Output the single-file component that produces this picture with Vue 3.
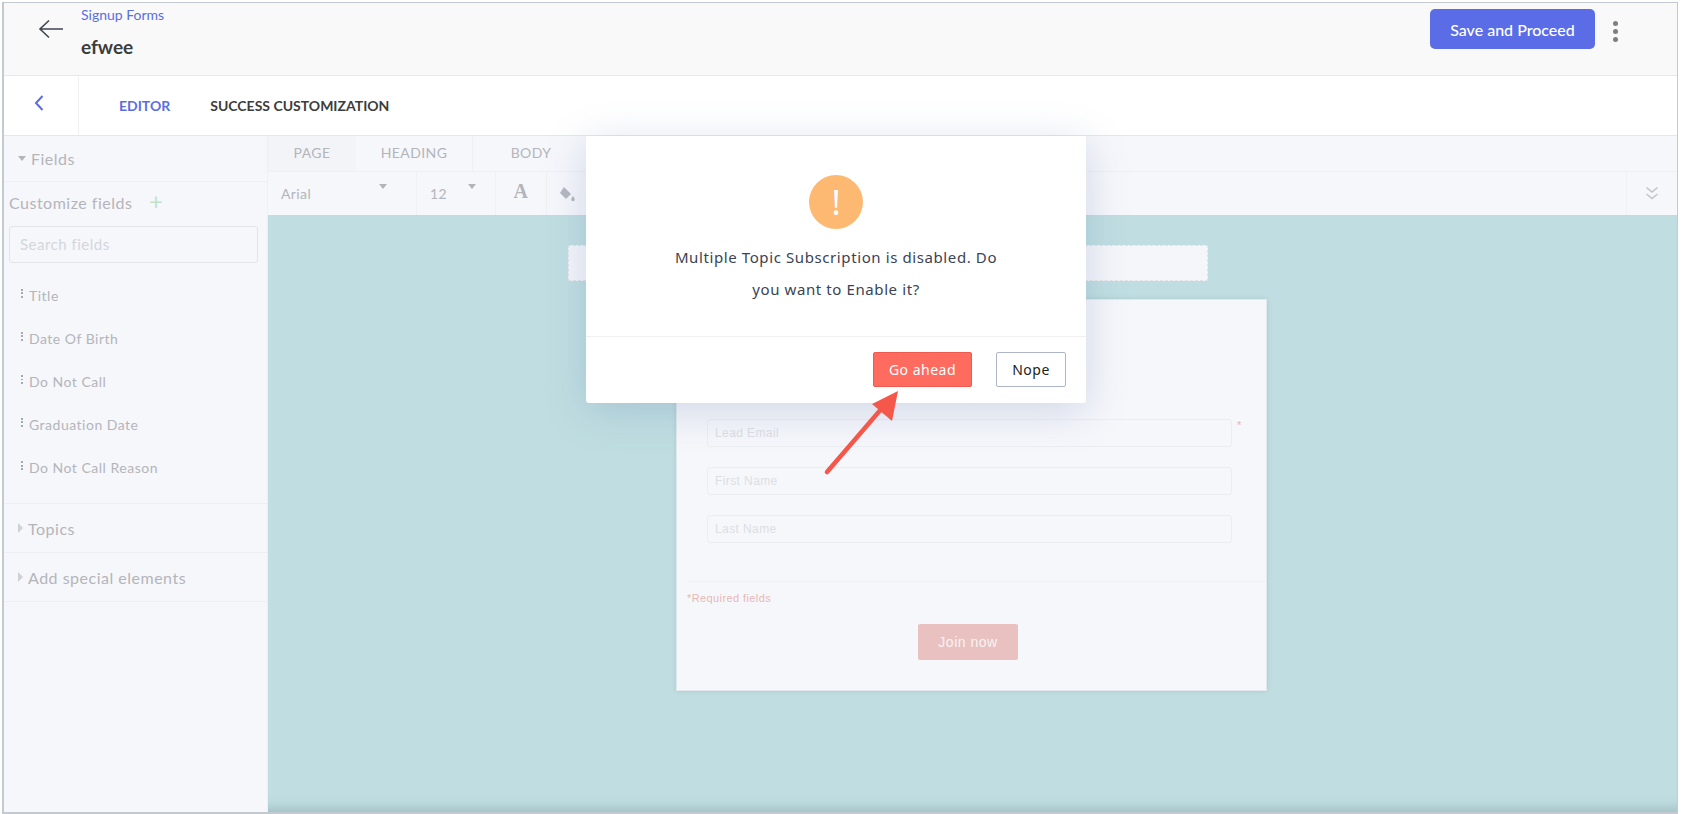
<template>
  <div class="frame">
    <header class="topbar">
      <div class="topbar-left">
        <svg class="back" width="26" height="20" viewBox="0 0 26 20">
          <path d="M25 10H2M11 1.5L2 10l9 8.5" fill="none" stroke="#3f4650" stroke-width="1.6" />
        </svg>
        <div class="crumbs">
          <a class="crumb-link">Signup Forms</a>
          <div class="crumb-title">efwee</div>
        </div>
      </div>
      <div class="topbar-right">
        <button class="save-btn">Save and Proceed</button>
        <div class="kebab"><i /><i /><i /></div>
      </div>
    </header>

    <nav class="tabbar">
      <div class="tab-back">
        <svg width="12" height="18" viewBox="0 0 12 18">
          <path d="M9.5 2L3 9l6.5 7" fill="none" stroke="#5a6ee0" stroke-width="2" />
        </svg>
      </div>
      <div class="tab active">EDITOR</div>
      <div class="tab">SUCCESS CUSTOMIZATION</div>
    </nav>

    <div class="body">
      <aside class="sidebar">
        <div class="section open"><span class="caret-down" />Fields</div>
        <div class="customize">Customize fields <span class="plus">+</span></div>
        <div class="search">Search fields</div>
        <ul class="fields">
          <li v-for="f in fields" :key="f"><span class="grip" />{{ f }}</li>
        </ul>
        <div class="section closed"><span class="caret-right" />Topics</div>
        <div class="section closed"><span class="caret-right" />Add special elements</div>
      </aside>

      <main class="editor">
        <div class="toolbar-tabs">
          <div class="ttab first">PAGE</div>
          <div class="ttab">HEADING</div>
          <div class="ttab">BODY</div>
        </div>
        <div class="toolbar">
          <div class="tool font">Arial<span class="caret-down small" /></div>
          <div class="tool size">12<span class="caret-down small" /></div>
          <div class="tool glyph">A</div>
          <div class="tool bucket">
            <svg width="18" height="16" viewBox="0 0 18 16">
              <path d="M6 1l7 7-5 5-6-6z" fill="#b5b8bf" />
              <path d="M15 10c1.2 1.8 1.8 2.6 1.8 3.4a1.8 1.8 0 0 1-3.6 0c0-.8.6-1.6 1.8-3.4z" fill="#b5b8bf" />
            </svg>
          </div>
          <div class="spacer" />
          <div class="tool more">
            <svg width="14" height="15" viewBox="0 0 14 15">
              <path d="M1.5 1.5L7 6l5.5-4.5M1.5 8L7 12.5 12.500 8" fill="none" stroke="#c0c3c9" stroke-width="1.5" />
            </svg>
          </div>
        </div>

        <div class="canvas">
          <div class="heading-strip" />
          <div class="form-card">
            <p class="form-sub">Sign up to get the latest news, offers, product updates and much more.</p>
            <div class="form-row" v-for="(p, i) in inputs" :key="p">
              <div class="form-input">{{ p }}</div>
              <span class="req">{{ i === 0 ? '*' : '' }}</span>
            </div>
            <div class="form-rule" />
            <div class="form-note">*Required fields</div>
            <div class="join">Join now</div>
          </div>
        </div>
      </main>

      <div class="modal">
        <div class="modal-body">
          <div class="alert">!</div>
          <p class="msg">Multiple Topic Subscription is disabled. Do<br />you want to Enable it?</p>
        </div>
        <div class="modal-foot">
          <button class="go">Go ahead</button>
          <button class="nope">Nope</button>
        </div>
      </div>

      <svg class="arrow" width="90" height="90" viewBox="0 0 90 90">
        <path d="M8 82L70 10" stroke="#f5574b" stroke-width="4.500" stroke-linecap="round" fill="none" />
        <path d="M79 1L53 14l20 17z" fill="#f5574b" />
      </svg>
    </div>
  </div>
</template>

<script setup>
const fields = ['Title', 'Date Of Birth', 'Do Not Call', 'Graduation Date', 'Do Not Call Reason'];
const inputs = ['Lead Email', 'First Name', 'Last Name'];
</script>

<style>
html, body {
  margin: 0;
  background: #fff;
}
</style>

<style scoped>
.frame {
  box-sizing: border-box;
  width: 1676px;
  height: 812px;
  margin: 2px 0 0 2px;
  border: 1px solid #c4cbd0;
  border-left-width: 2px;
  border-bottom-width: 2px;
  display: flex;
  flex-direction: column;
  overflow: hidden;
  font-family: Lato, sans-serif;
}

.topbar {
  height: 73px;
  flex: none;
  background: #f9f9f9;
  border-bottom: 1px solid #e8e8ea;
  display: flex;
  justify-content: space-between;
  box-sizing: border-box;
}

.topbar-left {
  display: flex;
}

.back {
  margin: 16px 0 0 34px;
}

.crumbs {
  margin-left: 17px;
}

.crumb-link {
  display: block;
  color: #5a6ee0;
  font-size: 14px;
  line-height: 18px;
  margin-top: 3px;
}

.crumb-title {
  color: #3c3c3c;
  font-size: 19px;
  font-weight: 700;
  line-height: 24px;
  margin-top: 11px;
}

.topbar-right {
  display: flex;
  align-items: flex-start;
}

.save-btn {
  width: 165px;
  height: 40px;
  margin-top: 6px;
  border: 0;
  border-radius: 5px;
  background: #5a6de6;
  color: #fff;
  font: 500 16px Lato, sans-serif;
}

.kebab {
  display: flex;
  flex-direction: column;
  gap: 3px;
  margin: 18px 59px 0 18px;
}

.kebab i {
  width: 5px;
  height: 5px;
  border-radius: 50%;
  background: #7f7f7f;
}

.tabbar {
  height: 60px;
  flex: none;
  background: #fff;
  border-bottom: 1px solid #e6e7ea;
  box-sizing: border-box;
  display: flex;
  align-items: center;
}

.tab-back {
  width: 75px;
  height: 100%;
  box-sizing: border-box;
  border-right: 1px solid #eff0f2;
  padding: 18px 0 0 29px;
}

.tab {
  font-size: 14px;
  font-weight: 700;
  color: #3c3c3c;
  margin-left: 40px;
  position: relative;
  line-height: 60px;
}

.tab.active {
  color: #5a6ee0;
  margin-right: 0;
}

.tab.active::after {
  content: '';
  position: absolute;
  left: 0;
  right: 0;
  bottom: -5px;
  height: 4px;
  background: #5a6ee0;
  border-radius: 0 0 4px 4px;
}

.tab.active::before {
  content: '';
  position: absolute;
  left: 50%;
  margin-left: -4px;
  bottom: -9px;
  border: 4px solid transparent;
  border-top-color: #5a6ee0;
  border-bottom: 0;
}

.body {
  flex: 1;
  display: flex;
  position: relative;
  min-height: 0;
  background: #f6f7fb;
}

.sidebar {
  width: 264px;
  flex: none;
  box-sizing: border-box;
  color: #b3b5ba;
  letter-spacing: 0.5px;
  border-right: 1px solid #eef0f3;
}

.section {
  font-size: 16px;
  display: flex;
  align-items: center;
  border-bottom: 1px solid #eeeff3;
  box-sizing: border-box;
  height: 49px;
}

.section.open {
  height: 46px;
  padding-left: 14px;
  padding-top: 0;
}

.section.closed {
  padding-left: 14px;
}

.caret-down {
  display: inline-block;
  border: 4.500px solid transparent;
  border-top: 5px solid #b3b5ba;
  border-bottom: 0;
  margin-right: 5px;
}

.caret-right {
  display: inline-block;
  border: 5px solid transparent;
  border-left: 5px solid #cfd1d5;
  border-right: 0;
  margin-right: 5px;
}

.customize {
  font-size: 16px;
  padding: 9px 0 0 5px;
  height: 44px;
  box-sizing: border-box;
  line-height: 24px;
}

.plus {
  color: #bfe3cb;
  font-size: 24px;
  font-weight: 400;
  margin-left: 12px;
  line-height: 20px;
  vertical-align: -1px;
}

.search {
  box-sizing: border-box;
  width: 249px;
  height: 37px;
  margin-left: 5px;
  border: 1px solid #e2e4e9;
  border-radius: 3px;
  font-size: 15px;
  line-height: 35px;
  padding-left: 10px;
  color: #d4d6da;
}

.fields {
  list-style: none;
  margin: 0;
  padding: 11px 0 14px;
  border-bottom: 1px solid #eeeff3;
}

.fields li {
  font-size: 14px;
  height: 43px;
  line-height: 43px;
  padding-left: 17px;
  display: flex;
  align-items: center;
}

.grip {
  width: 2px;
  height: 9px;
  margin-right: 6px;
  margin-top: -4px;
  background: repeating-linear-gradient(#a8aab0 0 2px, transparent 2px 3.500px);
}

.editor {
  flex: 1;
  min-width: 0;
  display: flex;
  flex-direction: column;
}

.toolbar-tabs {
  height: 36px;
  flex: none;
  display: flex;
  border-bottom: 1px solid #eef0f4;
  box-sizing: border-box;
}

.ttab {
  width: 116px;
  font-size: 14px;
  letter-spacing: 0.4px;
  color: #b3b5ba;
  text-align: center;
  line-height: 34px;
  border-right: 1px solid #eff0f4;
  background: #f6f7fb;
}

.ttab.first {
  width: 88px;
  background: #f3f4f7;
  border-right: 0;
}

.toolbar {
  height: 43px;
  flex: none;
  display: flex;
  align-items: stretch;
  color: #b3b5ba;
}

.tool {
  border-right: 1px solid #f0f1f5;
  display: flex;
  align-items: center;
  font-size: 14px;
  letter-spacing: 0.4px;
  position: relative;
}

.tool .small {
  position: absolute;
  top: 12px;
}

.font {
  width: 149px;
  padding-left: 13px;
  box-sizing: border-box;
}

.font .small {
  right: 24px;
}

.size {
  width: 79px;
  padding-left: 13px;
  box-sizing: border-box;
}

.size .small {
  right: 14px;
}

.glyph {
  width: 51px;
  justify-content: center;
  font: 700 20px "Liberation Serif", serif;
  padding-bottom: 4px;
  box-sizing: border-box;
}

.bucket {
  width: 40px;
  justify-content: center;
  border-right: 0;
}

.spacer {
  flex: 1;
}

.more {
  width: 50px;
  justify-content: center;
  border-right: 0;
  border-left: 1px solid #f0f1f5;
}

.canvas {
  flex: 1;
  min-height: 0;
  background: #c0dee1;
  position: relative;
  display: flex;
  flex-direction: column;
  align-items: flex-start;
  box-shadow: inset 0 -16px 14px -14px rgba(80, 110, 115, 0.35);
}

.heading-strip {
  width: 640px;
  height: 36px;
  margin: 30px 0 0 300px;
  flex: none;
  background: #f5f6fa;
  border: 1px dashed #dfe2e6;
  box-sizing: border-box;
}

.form-card {
  box-sizing: border-box;
  width: 591px;
  height: 392px;
  margin: 18px 0 0 408px;
  flex: none;
  background: #f6f7fb;
  border: 1px solid #e4e9ee;
  padding: 85px 20px 0 30px;
  font-family: "Liberation Sans", sans-serif;
  box-shadow: 0 0 4px rgba(120, 160, 165, 0.35);
}

.form-sub {
  margin: 0 0 20px;
  font-size: 11px;
  color: #c2c4c8;
  line-height: 14px;
  white-space: nowrap;
  letter-spacing: 0.5px;
}

.form-row {
  display: flex;
  gap: 5px;
  height: 48px;
}

.form-input {
  box-sizing: border-box;
  width: 525px;
  height: 28px;
  border: 1px solid #ebedf1;
  border-radius: 3px;
  font-size: 12px;
  line-height: 26px;
  padding-left: 7px;
  color: #dcdee2;
  letter-spacing: 0.4px;
}

.req {
  color: #e3b3b3;
  font-size: 11px;
}

.form-rule {
  margin: 18px -20px 0 -20px;
  border-top: 1px solid #eff0f4;
}

.form-note {
  margin: 10px 0 0 -20px;
  font-size: 11px;
  letter-spacing: 0.4px;
  color: #e8b7b7;
}

.join {
  width: 100px;
  height: 36px;
  margin: 20px 0 0 211px;
  border-radius: 2px;
  background: #e9c1c1;
  color: #f7f3f3;
  font-size: 14px;
  letter-spacing: 0.5px;
  text-align: center;
  line-height: 36px;
}

.modal {
  position: absolute;
  left: 582px;
  top: 0;
  width: 500px;
  height: 267px;
  background: #fff;
  border-radius: 0 0 3px 3px;
  box-shadow: 0 8px 40px rgba(90, 120, 170, 0.25);
  font-family: "Noto Sans", sans-serif;
}

.modal-body {
  height: 201px;
  box-sizing: border-box;
  border-bottom: 1px solid #f1f1f3;
  padding-top: 39px;
  text-align: center;
}

.alert {
  width: 54px;
  height: 54px;
  margin: 0 auto;
  border-radius: 50%;
  background: #fdb971;
  color: #fff;
  font-size: 34px;
  line-height: 54px;
}

.msg {
  margin: 12px 0 0;
  font-size: 15px;
  line-height: 32px;
  letter-spacing: 0.6px;
  color: #3a4354;
}

.modal-foot {
  display: flex;
  justify-content: flex-end;
  gap: 24px;
  padding: 15px 20px 0 0;
}

.modal-foot button {
  height: 35px;
  border-radius: 2px;
  font: 14px "Noto Sans", sans-serif;
  letter-spacing: 0.5px;
  box-sizing: border-box;
}

.go {
  width: 99px;
  background: #ff6b5f;
  border: 1px solid #ec5a50;
  color: #fff;
}

.nope {
  width: 70px;
  background: #fff;
  border: 1px solid #aeb5c6;
  color: #222;
}

.arrow {
  position: absolute;
  left: 815px;
  top: 254px;
}
</style>
